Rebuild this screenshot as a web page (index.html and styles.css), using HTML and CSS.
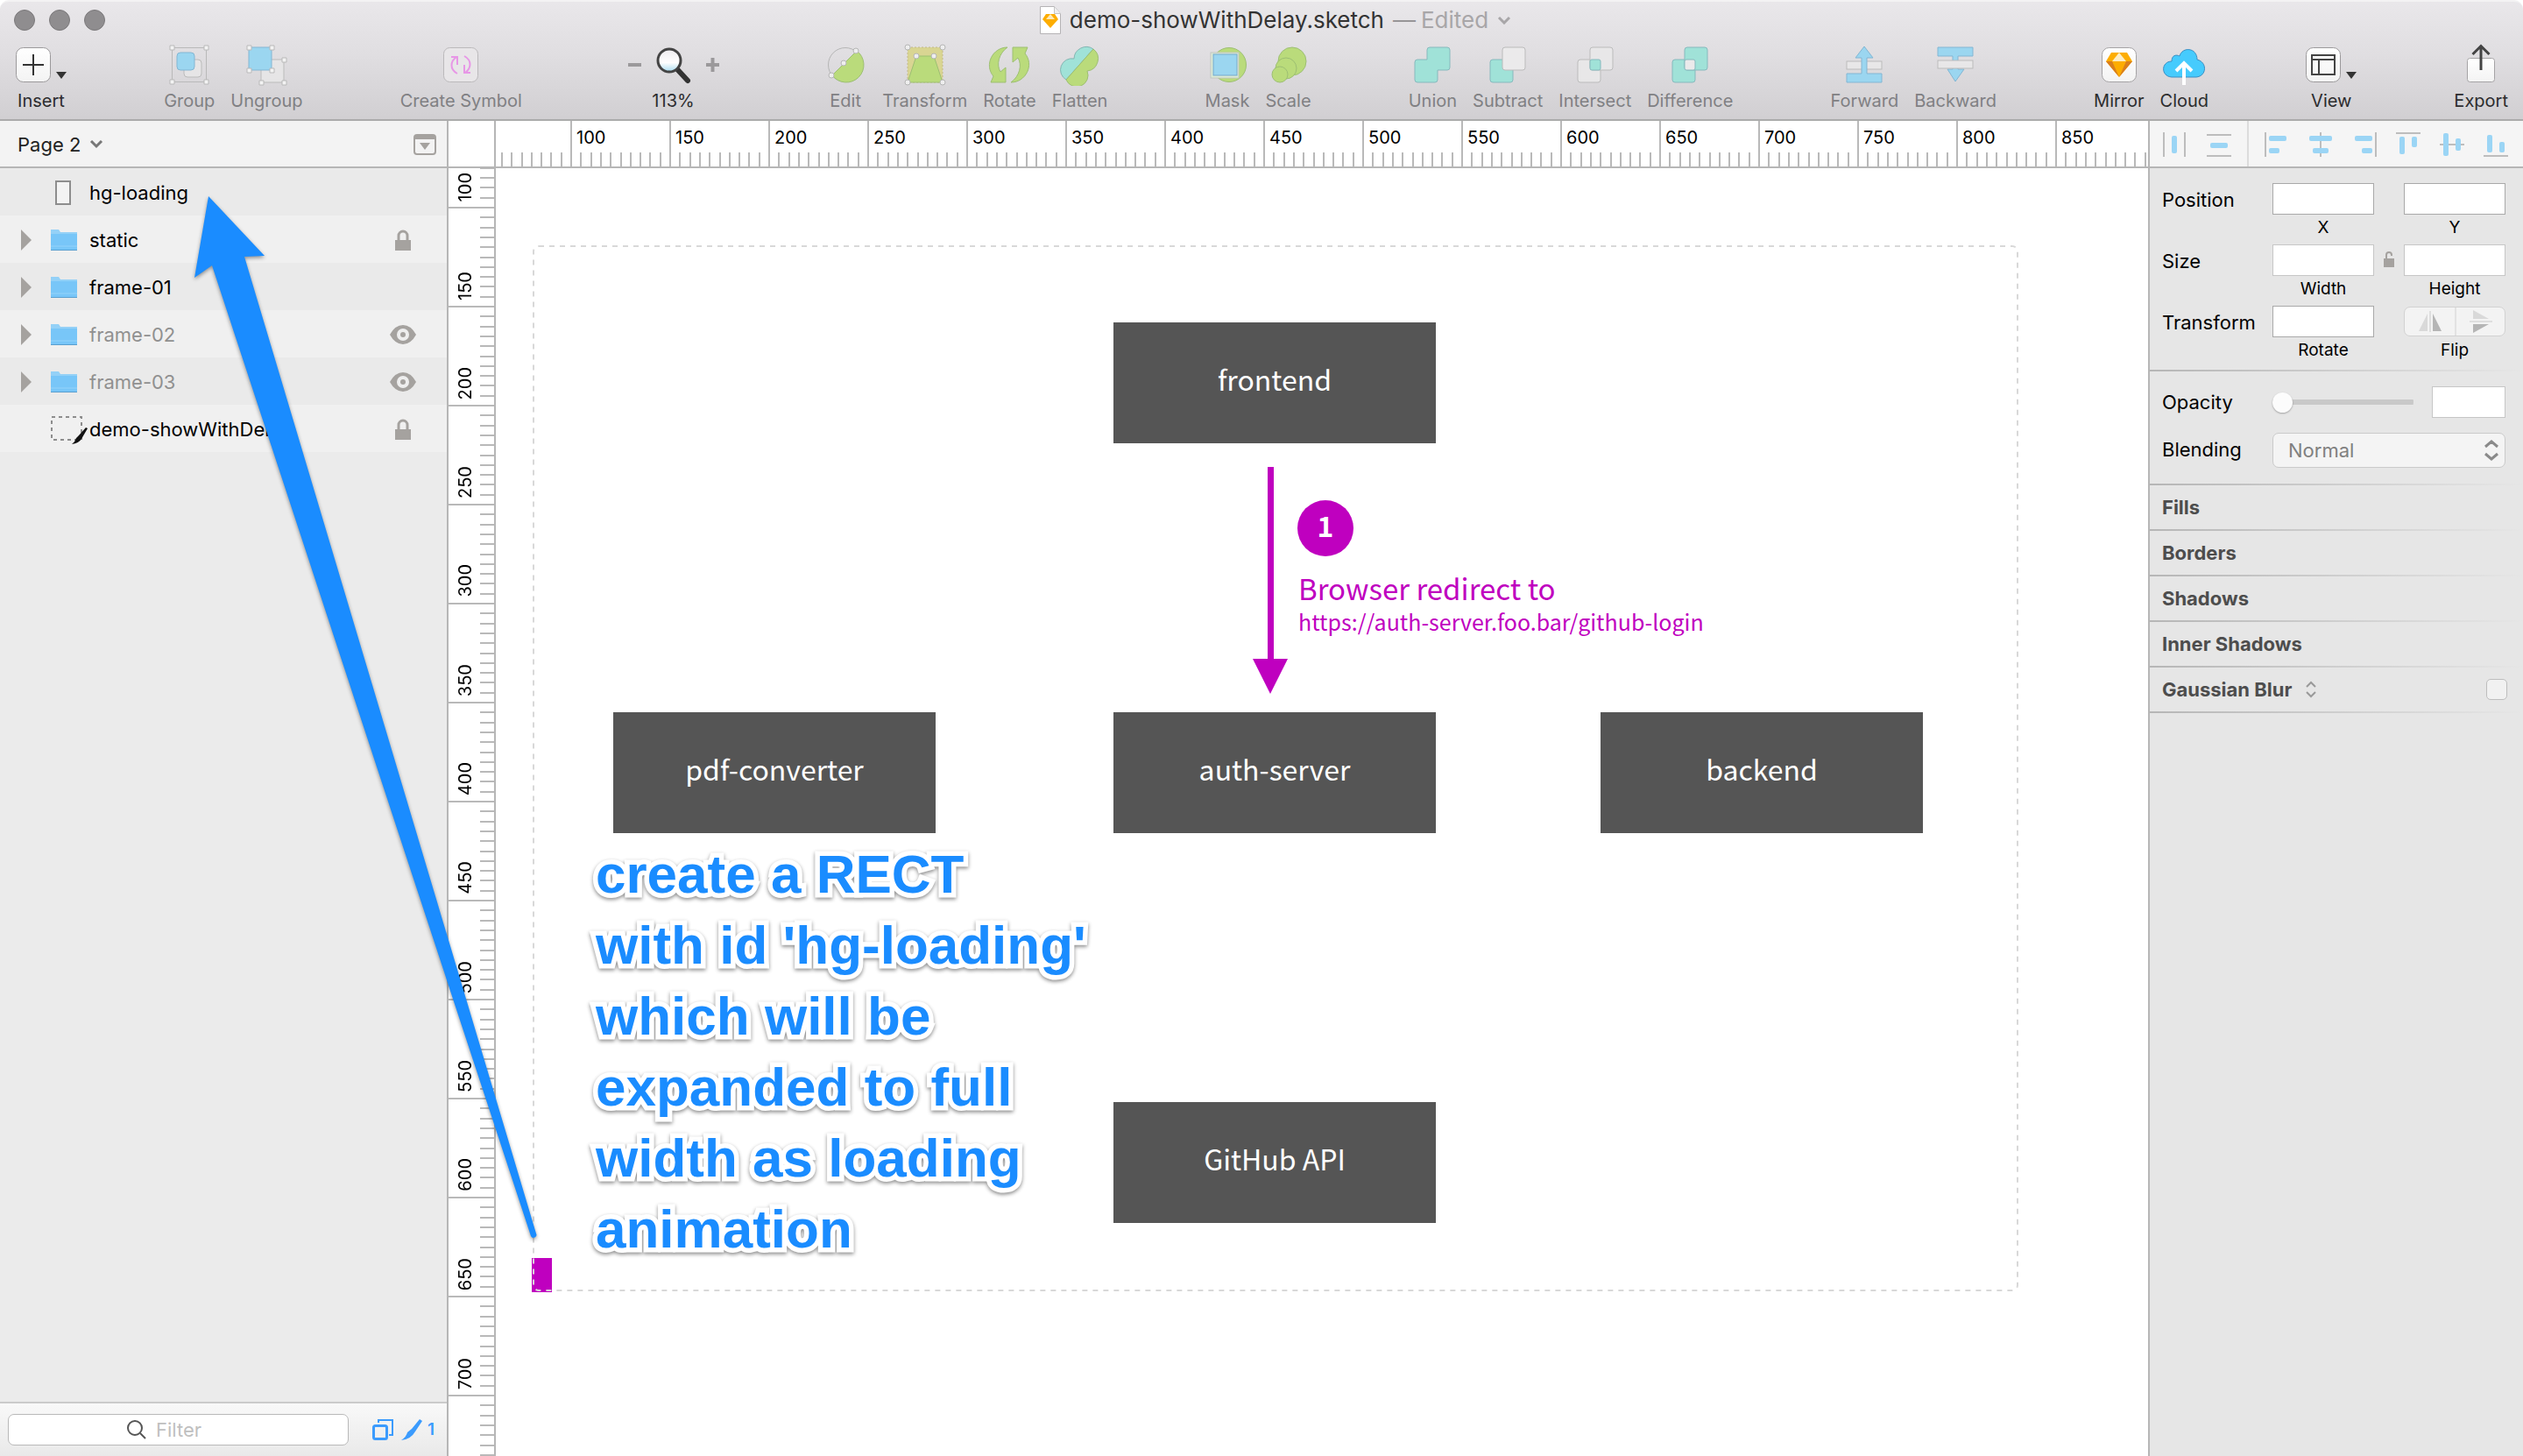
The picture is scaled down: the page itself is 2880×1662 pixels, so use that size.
FILE: index.html
```html
<!DOCTYPE html>
<html lang="en">
<head>
<meta charset="utf-8">
<title>demo-showWithDelay.sketch</title>
<link rel="stylesheet" href="styles.css">
</head>
<body>
<svg class="defs" aria-hidden="true">
  <defs>
    <linearGradient id="paper" x1="0" y1="0" x2="0" y2="1"><stop offset="0" stop-color="#fff"/><stop offset="1" stop-color="#f3f3f3"/></linearGradient>
    <linearGradient id="lens" x1="0" y1="0" x2="0" y2="1"><stop offset="0" stop-color="#eeecef"/><stop offset=".6" stop-color="#fff"/><stop offset="1" stop-color="#a9dcf0"/></linearGradient>
    <symbol id="folder" viewBox="0 0 30 26"><path d="M0 1h9l2 3h19v21H0z" fill="#94d1f7"/><path d="M0 6h30v18H0z" fill="#78c6f8"/><path d="M0 20h30" stroke="#94d3fa" stroke-width="1"/><path d="M0 24.5h30" stroke="#5a9fcf" stroke-width="1"/></symbol>
    <symbol id="lock" viewBox="0 0 18 24"><path d="M4 13V7a5 5 0 0 1 10 0v6" fill="none" stroke="#a5a29f" stroke-width="3"/><path d="M0 12h18v12H0z" fill="#a5a29f"/></symbol>
    <symbol id="eye" viewBox="0 0 30 22"><path d="M0 11Q6 0 15 0t15 11q-6 11-15 11T0 11z" fill="#a5a29f"/><circle cx="15" cy="11" r="7" fill="#eee"/><circle cx="15" cy="11" r="3" fill="#a5a29f"/></symbol>
    <symbol id="caret" viewBox="0 0 12 24"><path d="M0 0l12 12L0 24z" fill="#a5a29f"/></symbol>
  </defs>
</svg>
<div class="app">
  <header class="header">
    <div class="titlebar">
      <div class="lights"><i></i><i></i><i></i></div>
      <h1 class="title">
        <svg width="24" height="32" viewBox="0 0 24 32"><path d="M.5.5h16l7 8v23H.5z" fill="#fff" stroke="#b5b3b5"/><path d="M16.500 .5v8h7" fill="#eee" stroke="#c5c5c5"/><path d="M7 9h10l4 6-9 10-9-10z" fill="#fdad00"/><path d="M12 9l5 6H7z" fill="#fde9b8"/></svg>
        <span>demo-showWithDelay.sketch</span><span class="dash">—</span><span class="edited">Edited</span>
        <svg class="title-chevron" width="16" height="10" viewBox="0 0 16 10"><path d="M2 2l6 6 6-6" fill="none" stroke="#a8a6a8" stroke-width="3"/></svg>
      </h1>
    </div>
    <nav class="toolbar" aria-label="Toolbar">
      <div class="group">
        <button class="tool on"><svg width="58" height="48" viewBox="0 0 58 48"><rect x=".5" y="4.500" width="39" height="39" rx="8" fill="url(#paper)" stroke="#9b999b"/><path d="M20 12v24M8 24h24" stroke="#333" stroke-width="2"/><path d="M46 32h12l-6 8z" fill="#333"/></svg><span>Insert</span></button>
      </div>
      <div class="group">
        <button class="tool"><svg width="48" height="48" viewBox="0 0 48 48"><rect x="18" y="18" width="20" height="20" rx="4" fill="#e6e5e6" stroke="#bbb"/><rect x="10" y="10" width="20" height="20" rx="4" fill="#9bd6f0" stroke="#83b6d3"/><rect x="4.500" y="4.500" width="39" height="39" fill="none" stroke="#b9b9b9"/><g fill="#f3f3f3" stroke="#b9b9b9"><path d="M2 2h5v5H2zM41 2h5v5h-5zM2 41h5v5H2zM41 41h5v5h-5z"/></g></svg><span>Group</span></button>
        <button class="tool"><svg width="48" height="48" viewBox="0 0 48 48"><rect x="18" y="18" width="26" height="26" fill="#e6e5e6" stroke="#bbb"/><rect x="4" y="4" width="26" height="26" fill="#9bd6f0" stroke="#83b6d3"/><g fill="#f3f3f3" stroke="#b9b9b9"><path d="M2 2h5v5H2zM28 2h5v5h-5zM2 28h5v5H2zM28 28h5v5h-5zM42 16h5v5h-5zM16 42h5v5h-5zM42 42h5v5h-5z"/></g></svg><span>Ungroup</span></button>
      </div>
      <div class="group">
        <button class="tool"><svg width="48" height="48" viewBox="0 0 48 48"><rect x="4.500" y="4.500" width="39" height="39" rx="7" fill="#e8e6e8" stroke="#bbb9bb"/><g fill="none" stroke="#e797e6" stroke-width="2"><path d="M20 34C11 29 12 20 19 15M13 15h7v9"/><path d="M28 14c9 5 8 14 1 19M35 33h-7v-9"/></g></svg><span>Create Symbol</span></button>
      </div>
      <div class="group">
        <div class="tool on zoom">
          <svg width="123" height="48" viewBox="0 0 123 48"><path d="M10 24h15M99 24h15M106.500 16v16" stroke="#9b999b" stroke-width="4"/><path d="M66 29l12 13" stroke="#333" stroke-width="6" stroke-linecap="round"/><circle cx="57" cy="19" r="13" fill="url(#lens)" stroke="#444" stroke-width="3"/></svg><span>113%</span>
        </div>
      </div>
      <div class="group">
        <button class="tool"><svg width="48" height="48" viewBox="0 0 48 48"><circle cx="24" cy="24" r="19.500" fill="none" stroke="#b5b5b5"/><path d="M37 8A20 20 0 1 1 9 36z" fill="#badb7b" stroke="#9dbf73"/><g fill="#eee" stroke="#b5b5b5"><circle cx="36" cy="8" r="3"/><circle cx="22" cy="22" r="3"/><circle cx="8" cy="36" r="3"/></g></svg><span>Edit</span></button>
        <button class="tool"><svg width="48" height="48" viewBox="0 0 48 48"><rect x="4" y="4" width="40" height="40" fill="#d9d592" stroke="#c3b98a" stroke-dasharray="2 2"/><path d="M14 14h20l10 30H4z" fill="#badb7b" stroke="#9dbf73"/><g fill="#eee" stroke="#b5b5b5"><circle cx="4" cy="4" r="3"/><circle cx="44" cy="4" r="3"/><circle cx="14" cy="14" r="3"/><circle cx="34" cy="14" r="3"/><circle cx="4" cy="44" r="3"/><circle cx="44" cy="44" r="3"/></g></svg><span>Transform</span></button>
        <button class="tool"><svg width="48" height="48" viewBox="0 0 48 48"><g fill="#badb7b" stroke="#9dbf73"><path d="M22 4C5 4-5 24 6 37L3 44h17V27l-6 5C9 24 12 11 22 4z"/><path d="M26 44c17 0 27-20 16-33l3-7H28v17l6-5c5 8 2 21-8 28z"/></g></svg><span>Rotate</span></button>
        <button class="tool"><svg width="48" height="48" viewBox="0 0 48 48"><path d="M39 6A14 14 0 0 0 17 17 13 13 0 0 0 8 41z" fill="#a0e2d8" stroke="#83b6b3"/><path d="M39 6A14 14 0 0 1 32 31 13 13 0 0 1 8 41z" fill="#badb7b" stroke="#9dbf73"/></svg><span>Flatten</span></button>
      </div>
      <div class="group">
        <button class="tool"><svg width="48" height="48" viewBox="0 0 48 48"><circle cx="26" cy="24" r="19.500" fill="#badb7b" stroke="#9dbf73"/><rect x="5" y="10" width="32" height="29" fill="#dcebd5" stroke="#c2c6c2"/><rect x="8" y="12" width="27" height="24" fill="#9bd6f0" stroke="#74a9ce"/></svg><span>Mask</span></button>
        <button class="tool"><svg width="48" height="48" viewBox="0 0 48 48"><g fill="#badb7b" stroke="#9dbf73"><circle cx="28" cy="20" r="16"/><circle cx="21" cy="28" r="12"/><circle cx="14" cy="35" r="9"/></g></svg><span>Scale</span></button>
      </div>
      <div class="group">
        <button class="tool"><svg width="48" height="48" viewBox="0 0 48 48"><path d="M21 4h20q3 0 3 3v20q0 3-3 3H30v11q0 3-3 3H7q-3 0-3-3V21q0-3 3-3h11V7q0-3 3-3z" fill="#a0e2d8" stroke="#86b9bd"/></svg><span>Union</span></button>
        <button class="tool"><svg width="48" height="48" viewBox="0 0 48 48"><rect x="4" y="18" width="26" height="26" rx="3" fill="#a0e2d8" stroke="#86b9bd"/><rect x="18" y="4" width="26" height="26" rx="3" fill="#ebeaeb" stroke="#bbb"/></svg><span>Subtract</span></button>
        <button class="tool"><svg width="48" height="48" viewBox="0 0 48 48"><g fill="#e8e7e8" stroke="#bbb"><rect x="4" y="18" width="26" height="26" rx="3"/><rect x="18" y="4" width="26" height="26" rx="3"/></g><rect x="18" y="18" width="12" height="12" rx="2" fill="#a0e2d8" stroke="#86b9bd"/></svg><span>Intersect</span></button>
        <button class="tool"><svg width="48" height="48" viewBox="0 0 48 48"><g fill="#a0e2d8" stroke="#86b9bd"><rect x="4" y="18" width="26" height="26" rx="3"/><rect x="18" y="4" width="26" height="26" rx="3"/></g><rect x="18" y="18" width="12" height="12" rx="2" fill="#ebeaeb" stroke="#86b9bd"/></svg><span>Difference</span></button>
      </div>
      <div class="group">
        <button class="tool"><svg width="48" height="48" viewBox="0 0 48 48"><rect x="4" y="20" width="40" height="9" fill="#e8e7e8" stroke="#bbb"/><path d="M24 3l10 13h-7v18h17v10H4V34h17V16h-7z" fill="#9bd6f0" stroke="#83b6d3"/></svg><span>Forward</span></button>
        <button class="tool"><svg width="48" height="48" viewBox="0 0 48 48"><path d="M4 4h40v10H27v15h7l-10 14-9-14h6V14H4z" fill="#9bd6f0" stroke="#83b6d3"/><rect x="4" y="19" width="40" height="9" fill="#e8e7e8" stroke="#bbb"/></svg><span>Backward</span></button>
      </div>
      <div class="group">
        <button class="tool on"><svg width="48" height="48" viewBox="0 0 48 48"><rect x="4.500" y="4.500" width="39" height="39" rx="8" fill="url(#paper)" stroke="#a5a3a5"/><path d="M15 10h18l6 10-15 18L9 20z" fill="#fdad00"/><path d="M9 20h7l8 18zM39 20h-7l-8 18z" fill="#d97e1c"/><path d="M24 10l8 10H16z" fill="#fdedc4"/></svg><span>Mirror</span></button>
        <button class="tool on"><svg width="48" height="48" viewBox="0 0 48 48"><path d="M10 38C-3 37-2 20 10 20c0-7 5-8 9-6 3-11 20-10 20 4 12 3 11 19-1 20z" fill="#46cbfd" stroke="#3a8fc4"/><path d="M24 47V22M15 31l9-9 9 9" fill="none" stroke="#fff" stroke-width="4"/></svg><span>Cloud</span></button>
      </div>
      <div class="group">
        <button class="tool on"><svg width="58" height="48" viewBox="0 0 58 48"><rect x=".5" y="4.500" width="39" height="39" rx="8" fill="url(#paper)" stroke="#9b999b"/><path d="M7 13h26v22H7zM7 18h26M15 18v17" fill="none" stroke="#444" stroke-width="2"/><path d="M46 32h12l-6 8z" fill="#333"/></svg><span>View</span></button>
      </div>
      <div class="group">
        <button class="tool on"><svg width="48" height="48" viewBox="0 0 48 48"><rect x="8.500" y="16.500" width="31" height="27" rx="3" fill="url(#paper)" stroke="#a5a3a5"/><path d="M24 30V3M14.500 12L24 2.500 33.500 12" fill="none" stroke="#444" stroke-width="3"/></svg><span>Export</span></button>
      </div>
    </nav>
  </header>

  <main class="workspace">
    <aside class="sidebar">
      <div class="pages">
        <button class="page-select">Page 2 <svg width="16" height="10" viewBox="0 0 16 10"><path d="M2 1l6 6 6-6" fill="none" stroke="#777" stroke-width="3"/></svg></button>
        <button aria-label="Show page list"><svg width="26" height="24" viewBox="0 0 26 24"><rect x="1" y="1" width="24" height="22" rx="3" fill="none" stroke="#a5a29f" stroke-width="2"/><path d="M1 1h24v5H1zM7 10h12l-6 8z" fill="#a5a29f"/></svg></button>
      </div>
      <ul class="layers">
        <li><span class="twist"></span><span class="kind"><svg width="18" height="28" viewBox="0 0 18 28"><rect x="1" y="1" width="16" height="26" fill="#f3f3f3" stroke="#8d8d8d" stroke-width="2"/></svg></span><span class="name">hg-loading</span></li>
        <li><span class="twist"><svg width="12" height="24"><use href="#caret"/></svg></span><span class="kind"><svg width="30" height="26"><use href="#folder"/></svg></span><span class="name">static</span><svg width="18" height="24"><use href="#lock"/></svg></li>
        <li><span class="twist"><svg width="12" height="24"><use href="#caret"/></svg></span><span class="kind"><svg width="30" height="26"><use href="#folder"/></svg></span><span class="name">frame-01</span></li>
        <li class="hidden-layer"><span class="twist"><svg width="12" height="24"><use href="#caret"/></svg></span><span class="kind"><svg width="30" height="26"><use href="#folder"/></svg></span><span class="name">frame-02</span><svg width="30" height="22"><use href="#eye"/></svg></li>
        <li class="hidden-layer"><span class="twist"><svg width="12" height="24"><use href="#caret"/></svg></span><span class="kind"><svg width="30" height="26"><use href="#folder"/></svg></span><span class="name">frame-03</span><svg width="30" height="22"><use href="#eye"/></svg></li>
        <li><span class="twist"></span><span class="kind"><svg width="42" height="34" viewBox="5 0 42 34"><rect x="6" y="3" width="34" height="26" fill="none" stroke="#8d8d8d" stroke-width="2" stroke-dasharray="4 4"/><path d="M45 15l2 1-7 12q-3 5-11 6 4-3 5-7l3-3z" fill="#111"/></svg></span><span class="name">demo-showWithDelay</span><svg width="18" height="24"><use href="#lock"/></svg></li>
      </ul>
      <div class="filterbar">
        <label class="filter"><svg width="22" height="22" viewBox="0 0 22 22"><circle cx="9" cy="9" r="8" fill="none" stroke="#555" stroke-width="2"/><path d="M15 15l6 6" stroke="#555" stroke-width="2"/></svg><input type="text" placeholder="Filter" aria-label="Filter layers"></label>
        <button aria-label="Toggle artboards"><svg width="24" height="24" viewBox="0 0 24 24"><path d="M7 4V1h16v17h-4" fill="none" stroke="#3b9bfd" stroke-width="2"/><rect x="1.500" y="7.500" width="15" height="15" rx="2" fill="none" stroke="#3b9bfd" stroke-width="3"/></svg></button>
        <button class="slices"><svg width="24" height="24" viewBox="0 0 24 24"><path d="M21 0l3 2-8 12q-5 9-16 10 6-4 7-9l5-4z" fill="#3b9bfd"/></svg>1</button>
      </div>
    </aside>

    <section class="editor">
      <div class="corner"></div>
      <div class="ruler ruler-x" data-from="50" data-to="850" data-first-label="100" data-last-label="850"></div>
      <div class="ruler ruler-y" data-from="100" data-to="750" data-first-label="100" data-last-label="700"></div>
      <div class="canvas">
        <div class="node frontend">frontend</div>
        <div class="node converter">pdf-converter</div>
        <div class="node auth">auth-server</div>
        <div class="node backend">backend</div>
        <div class="node github">GitHub API</div>
        <svg class="flow" width="40" height="260" viewBox="0 0 40 260"><path d="M17 0h7v219h16L20 259 0 219h17z" fill="#bf00bf"/></svg>
        <div class="step">1</div>
        <div class="redirect"><p>Browser redirect to</p><p class="url">https://auth-server.foo.bar/github-login</p></div>
        <div class="loading"></div>
        <svg class="artboard" width="1698" height="1194" viewBox="0 0 1698 1194"><rect x="2" y="1" width="1694" height="1192" rx="6" fill="none" stroke="#d8d8d8" stroke-width="2" stroke-dasharray="6 6"/></svg>
        <p class="note">create a RECT<br>with id 'hg-loading'<br>which will be<br>expanded to full<br>width as loading<br>animation</p>
      </div>
    </section>

    <aside class="inspector">
      <div class="align">
        <button aria-label="Distribute horizontally"><svg width="28" height="28" viewBox="0 0 28 28"><path d="M1 0v28M25 0v28" stroke="#bdbdbd" stroke-width="2"/><rect x="10" y="4" width="6" height="20" rx="2"/></svg></button>
        <button aria-label="Distribute vertically"><svg width="28" height="28" viewBox="0 0 28 28"><path d="M0 3h28M0 27h28" stroke="#bdbdbd" stroke-width="2"/><rect x="4" y="12" width="20" height="6" rx="2"/></svg></button>
        <span class="divider"></span>
        <button aria-label="Align left"><svg width="28" height="28" viewBox="0 0 28 28"><path d="M1 0v28" stroke="#bdbdbd" stroke-width="2"/><rect x="5" y="4" width="20" height="6" rx="2"/><rect x="5" y="18" width="12" height="6" rx="2"/></svg></button>
        <button aria-label="Align center"><svg width="28" height="28" viewBox="0 0 28 28"><path d="M14 0v28" stroke="#bdbdbd" stroke-width="2"/><rect x="1" y="4" width="26" height="6" rx="2"/><rect x="5" y="18" width="18" height="6" rx="2"/></svg></button>
        <button aria-label="Align right"><svg width="28" height="28" viewBox="0 0 28 28"><path d="M27 0v28" stroke="#bdbdbd" stroke-width="2"/><rect x="3" y="4" width="20" height="6" rx="2"/><rect x="11" y="18" width="12" height="6" rx="2"/></svg></button>
        <button aria-label="Align top"><svg width="28" height="28" viewBox="0 0 28 28"><path d="M0 1h28" stroke="#bdbdbd" stroke-width="2"/><rect x="4" y="5" width="6" height="20" rx="2"/><rect x="18" y="5" width="6" height="12" rx="2"/></svg></button>
        <button aria-label="Align middle"><svg width="28" height="28" viewBox="0 0 28 28"><path d="M0 14h28" stroke="#bdbdbd" stroke-width="2"/><rect x="4" y="1" width="6" height="26" rx="2"/><rect x="18" y="7" width="6" height="14" rx="2"/></svg></button>
        <button aria-label="Align bottom"><svg width="28" height="28" viewBox="0 0 28 28"><path d="M0 27h28" stroke="#bdbdbd" stroke-width="2"/><rect x="4" y="3" width="6" height="20" rx="2"/><rect x="18" y="11" width="6" height="12" rx="2"/></svg></button>
      </div>
      <div class="geometry">
        <span class="prop">Position</span>
        <label class="field"><input type="text"><span>X</span></label><span></span>
        <label class="field"><input type="text"><span>Y</span></label>
        <span class="prop">Size</span>
        <label class="field soft"><input type="text"><span>Width</span></label>
        <button class="ratio" aria-label="Lock proportions"><svg width="12" height="18" viewBox="0 0 12 18"><path d="M3 9V4a3 3 0 0 1 6 0v1" fill="none" stroke="#a5a29f" stroke-width="2"/><path d="M0 8h12v10H0z" fill="#a5a29f"/></svg></button>
        <label class="field soft"><input type="text"><span>Height</span></label>
        <span class="prop">Transform</span>
        <label class="field"><input type="text"><span>Rotate</span></label><span></span>
        <div class="field"><div class="flip">
          <button aria-label="Flip horizontally"><svg width="26" height="24" viewBox="0 0 26 24"><path d="M0 23h10V3z" fill="#d9d9d9"/><path d="M26 23H16V3z" fill="#b5b5b5"/><path d="M13 0v24" stroke="#dedede" stroke-width="2"/></svg></button>
          <button aria-label="Flip vertically"><svg width="26" height="26" viewBox="0 0 26 26"><path d="M4 0v10h18z" fill="#d9d9d9"/><path d="M4 26V16h18z" fill="#b5b5b5"/><path d="M0 13h26" stroke="#dedede" stroke-width="2"/></svg></button>
        </div><span>Flip</span></div>
      </div>
      <div class="appearance">
        <label class="prop" for="opacity">Opacity</label>
        <div class="opacity-row"><input id="opacity" type="range" value="0"><input class="amount" type="text" aria-label="Opacity value"></div>
        <label class="prop" for="blending">Blending</label>
        <div class="select"><select id="blending"><option>Normal</option></select><svg width="16" height="24" viewBox="0 0 16 24"><path d="M1 8l7-6 7 6M1 16l7 6 7-6" fill="none" stroke="#8a8a8a" stroke-width="3"/></svg></div>
      </div>
      <h2>Fills</h2>
      <h2>Borders</h2>
      <h2>Shadows</h2>
      <h2>Inner Shadows</h2>
      <h2><label for="blur">Gaussian Blur</label><svg width="12" height="20" viewBox="0 0 12 20"><path d="M1 7l5-5 5 5M1 13l5 5 5-5" fill="none" stroke="#999" stroke-width="2"/></svg><input id="blur" type="checkbox"></h2>
    </aside>
  </main>
  <svg class="pointer" width="400" height="1200" viewBox="0 0 400 1200"><path d="M22 2l64 68-23 1L396 1186a3 3 0 0 1-6 3L26 81 6 95z" fill="#1a8cff"/></svg>
</div>
<script src="main.js"></script>
</body>
</html>
```
FILE: styles.css
```css
* { box-sizing: border-box; }
body { margin: 0; font: 22px/28px Inter, "Liberation Sans", sans-serif; color: #000; background: #fff; }
button { border: 0; padding: 0; background: none; font: inherit; color: inherit; }
h1, h2, p, ul { margin: 0; padding: 0; }
svg { display: block; flex: none; }
.defs { position: absolute; width: 0; height: 0; }

.app { position: relative; display: flex; flex-direction: column; min-height: 100vh; overflow: hidden; }

.header { background: linear-gradient(#e9e7ea, #e0dee1 45%, #d1cfd2); border-top: 2px solid #f3f2f3; border-bottom: 2px solid #ababab; border-radius: 10px 10px 0 0; }
.titlebar { display: grid; grid-template-columns: 1fr auto 1fr; align-items: center; height: 42px; padding: 0 16px; }
.lights { display: flex; gap: 16px; }
.lights i { width: 24px; height: 24px; border-radius: 50%; background: #8f8d8f; border: 1px solid #7b797b; }
.title { display: flex; align-items: center; gap: 10px; padding-left: 32px; font-size: 26px; font-weight: 400; line-height: 32px; color: #333; }
.title .dash { color: #979597; margin-right: -4px; }
.title .edited { color: #a8a6a8; }

.toolbar { display: flex; justify-content: space-between; padding: 6px 17px 9px 18px; }
.group { display: flex; gap: 18px; }
.tool { display: flex; flex-direction: column; align-items: center; gap: 5px; min-width: 48px; font-size: 20px; line-height: 24px; color: #808083; }
.tool.on { color: #2c2c2e; }

.workspace { flex: 1; display: grid; grid-template-columns: 512px minmax(0, 1fr) 428px; }

.sidebar { display: flex; flex-direction: column; background: #ebebeb; border-right: 2px solid #b6b6b6; }
.pages { display: flex; justify-content: space-between; align-items: center; height: 54px; padding: 2px 12px 0 20px; background: #f3f3f3; border-bottom: 2px solid #b6b6b6; color: #222; }
.page-select { display: flex; align-items: center; gap: 10px; }
.layers { flex: 1; list-style: none; }
.layers li { display: grid; grid-template-columns: 30px 42px 1fr 30px; align-items: center; justify-items: center; height: 54px; padding: 1px 35px 0 14px; background: #eaeaea; }
.layers li:nth-child(even) { background: #f0f0f0; }
.kind { display: grid; place-items: center; width: 42px; padding-left: 14px; }
.name { justify-self: start; padding-left: 16px; white-space: nowrap; }
.twist { padding-left: 2px; }
.hidden-layer .name { color: #909090; }
.filterbar { display: flex; align-items: center; height: 62px; padding: 0 14px 0 9px; background: linear-gradient(#f9f9f9, #e9e9e9); border-top: 2px solid #cbcbcb; color: #3b9bfd; gap: 9px; }
.filter { flex: 1; display: flex; align-items: center; gap: 11px; height: 36px; margin-right: 18px; padding-left: 135px; background: #fff; border: 1px solid #b9b9b9; border-radius: 7px; }
.filter input { width: 100%; min-width: 0; border: 0; padding: 0; background: none; font: inherit; }
.filter input::placeholder { color: #bfbfbf; opacity: 1; }
.slices { display: flex; align-items: center; gap: 6px; font-size: 19px; font-weight: 600; }

.editor { display: grid; grid-template-columns: 54px minmax(0, 1fr); grid-template-rows: 54px minmax(0, 1fr); background: #fff; }
.corner { border-right: 2px solid #b6b6b6; border-bottom: 2px solid #b6b6b6; }
.ruler { contain: size; overflow: hidden; display: flex; font-size: 20px; line-height: 24px; }
.ruler-x { border-bottom: 2px solid #b6b6b6; }
.ruler-y { flex-direction: column; border-right: 2px solid #b6b6b6; }
.block { flex: none; display: grid; }
.block > * { grid-area: 1 / 1; }
.ticks { display: grid; }
.ruler-x .block { width: 113px; }
.ruler-x .block:first-child { margin-left: -28px; }
.ruler-x .num { padding: 7px 0 0 7px; }
.ruler-x .ticks { grid-template-columns: repeat(10, 1fr); align-items: end; }
.ruler-x i { height: 16px; border-left: 2px solid #b9b9b9; }
.ruler-x .major { height: 100%; }
.ruler-y .block { height: 113px; }
.ruler-y .block:first-child { margin-top: -67px; }
.ruler-y .num { align-self: end; justify-self: start; margin: 0 0 8px 7px; writing-mode: vertical-rl; transform: rotate(180deg); }
.ruler-y .ticks { grid-template-rows: repeat(10, 1fr); justify-items: end; }
.ruler-y i { width: 16px; border-bottom: 2px solid #b9b9b9; }
.ruler-y .major { width: 100%; }

.canvas { position: relative; min-height: 1400px; overflow: hidden; font-family: "Noto Sans CJK SC", "Noto Sans", sans-serif; }
.canvas > * { position: absolute; }
.node { display: grid; place-items: center; width: 368px; height: 138px; padding-bottom: 11px; background: #555; color: #fff; font-size: 32px; line-height: 40px; }
.frontend { left: 705px; top: 176px; }
.converter { left: 134px; top: 621px; }
.auth { left: 705px; top: 621px; }
.backend { left: 1261px; top: 621px; }
.github { left: 705px; top: 1066px; }
.flow { left: 864px; top: 341px; }
.step { left: 915px; top: 379px; display: grid; place-items: center; width: 64px; height: 64px; padding-bottom: 8px; border-radius: 50%; background: #bf00bf; color: #fff; font-size: 32px; font-weight: 700; line-height: 40px; }
.redirect { left: 916px; top: 461px; color: #bf00bf; font-size: 33px; line-height: 36px; white-space: nowrap; }
.redirect .url { font-size: 25px; line-height: 40px; }
.loading { left: 41px; top: 1244px; width: 23px; height: 39px; background: #bf00bf; }
.artboard { left: 41px; top: 88px; }
.note { left: 114px; top: 765px; font: 700 62px/81px "Liberation Sans", Arial, sans-serif; color: #1a8cff; white-space: nowrap; -webkit-text-stroke: 11px #fff; paint-order: stroke fill; stroke-linejoin: round; filter: drop-shadow(0 2px 2px rgba(0, 0, 0, .45)); }

.inspector { background: #e6e6e6; border-left: 2px solid #b6b6b6; }
.align { display: flex; align-items: center; gap: 22px; height: 54px; padding: 2px 0 0 15px; background: #f5f5f5; border-bottom: 2px solid #b6b6b6; fill: #9bd5f5; }
.divider { align-self: stretch; width: 2px; margin: -2px -4px 0; background: #dcdcdc; }
.geometry { display: grid; grid-template-columns: 126px 116px 34px 116px; row-gap: 8px; padding: 17px 20px 11px 14px; }
.prop { line-height: 38px; }
.field { display: flex; flex-direction: column; gap: 4px; font-size: 19px; line-height: 22px; text-align: center; }
.field input, .amount { width: 100%; height: 36px; border: 1px solid #a9a9a9; background: #fff; }
.field.soft input, .amount { border-color: #c6c6c6; }
.ratio { justify-self: center; align-self: start; margin-top: 8px; }
.flip { display: grid; grid-template-columns: 1fr 1fr; height: 34px; margin: 1px 0; background: #f3f3f3; border: 1px solid #d2d2d2; border-radius: 7px; }
.flip button { display: grid; place-items: center; }
.flip button + button { border-left: 2px solid #e2e2e2; }
.appearance { display: grid; grid-template-columns: 126px 1fr; row-gap: 16px; padding: 18px 20px 18px 14px; }
.appearance, .inspector h2 { background: linear-gradient(to right, #b6b6b6, #e6e6e6) top / 100% 2px no-repeat; }
.opacity-row { display: flex; align-items: center; justify-content: space-between; }
.opacity-row input[type=range] { appearance: none; width: 161px; height: 24px; margin: 0; background: linear-gradient(#c9c9c9, #c9c9c9) center / 100% 6px no-repeat; border-radius: 12px; }
.opacity-row input[type=range]::-webkit-slider-thumb { appearance: none; width: 23px; height: 23px; border-radius: 50%; background: #fcfcfc; box-shadow: 0 1px 2px rgba(0, 0, 0, .3); }
.opacity-row .amount { width: 84px; }
.select { position: relative; }
.select select { appearance: none; display: block; width: 100%; height: 40px; padding: 0 17px; border: 1px solid #cacaca; border-radius: 7px; background: #f4f4f4; color: #808080; font: inherit; opacity: 1; }
.select svg { position: absolute; right: 8px; top: 8px; pointer-events: none; }
.inspector h2 { display: flex; align-items: center; gap: 16px; height: 52px; padding: 2px 18px 0 14px; font-size: 22px; font-weight: 700; color: #4d4d4d; }
.inspector h2:last-child { height: 54px; padding-bottom: 2px; background: linear-gradient(to right, #b6b6b6, #e6e6e6) top / 100% 2px no-repeat, linear-gradient(to right, #b6b6b6, #e6e6e6) bottom / 100% 2px no-repeat; }
.inspector h2 input { appearance: none; width: 24px; height: 24px; margin: 0 0 0 auto; background: #f1f1f1; border: 1px solid #bdbdbd; border-radius: 5px; }

.pointer { position: absolute; left: 216px; top: 222px; pointer-events: none; filter: drop-shadow(0 2px 2px rgba(0, 0, 0, .4)); }
```
FILE: main.js
```js
// Fill each ruler with one block per 50 units, ten ticks to a block.
for (const ruler of document.querySelectorAll('.ruler')) {
  const vertical = ruler.classList.contains('ruler-y');
  const { from, to, firstLabel, lastLabel } = ruler.dataset;
  for (let n = +from; n <= +to; n += 50) {
    const block = document.createElement('div');
    block.className = 'block';
    const ticks = document.createElement('div');
    ticks.className = 'ticks';
    for (let t = 0; t < 10; t++) {
      const tick = document.createElement('i');
      if (t === (vertical ? 9 : 0)) tick.className = 'major';
      ticks.append(tick);
    }
    block.append(ticks);
    if (n >= +firstLabel && n <= +lastLabel) {
      const label = document.createElement('span');
      label.className = 'num';
      label.textContent = n;
      block.append(label);
    }
    ruler.append(block);
  }
}
```
